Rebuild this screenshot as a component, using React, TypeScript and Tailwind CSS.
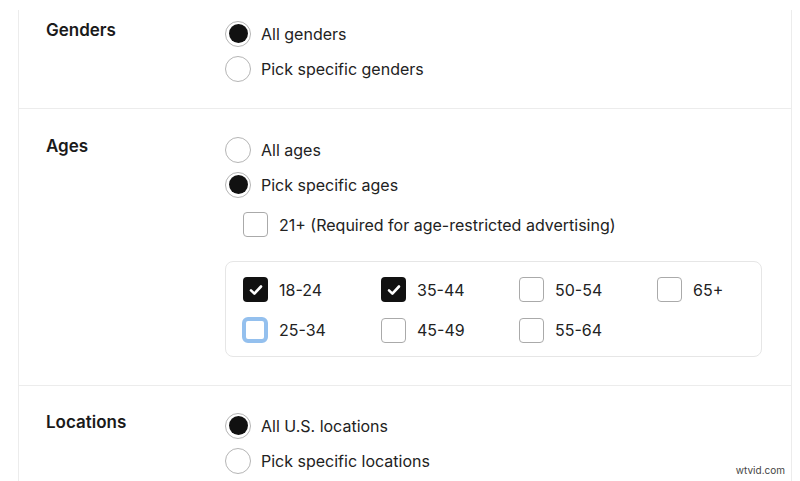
import React from "react"

function Radio({ checked, label }: { checked?: boolean; label: string }) {
  return (
    <div className="flex h-[35px] items-center gap-[10px]">
      <span className="flex h-[26px] w-[26px] shrink-0 items-center justify-center rounded-full border border-[#b5b5b5] bg-white">
        {checked && <span className="h-[19px] w-[19px] rounded-full bg-[#111]" />}
      </span>
      <span className="text-[16px] text-[#222]">{label}</span>
    </div>
  )
}

function Check({ checked, focused, label }: { checked?: boolean; focused?: boolean; label: string }) {
  return (
    <div className="flex items-center gap-[11px]">
      <span
        className={
          checked
            ? "flex h-[25px] w-[25px] shrink-0 items-center justify-center rounded-[4px] bg-[#111]"
            : focused
              ? "h-[26px] w-[26px] -ml-[1px] shrink-0 rounded-[6px] border-[4px] border-[#94c0ee] bg-white"
              : "h-[25px] w-[25px] shrink-0 rounded-[4px] border border-[#aaa] bg-white"
        }
      >
        {checked && (
          <svg width="16" height="16" viewBox="0 0 16 16" fill="none">
            <path d="M3 8.4 L6.4 11.6 L13 4.5" stroke="white" strokeWidth="2.6" strokeLinecap="round" strokeLinejoin="round" />
          </svg>
        )}
      </span>
      <span className="text-[16px] text-[#222]">{label}</span>
    </div>
  )
}

function Section({ label, children, className }: { label: string; children: React.ReactNode; className: string }) {
  return (
    <div className={"flex " + className}>
      <div className="w-[206px] shrink-0 pl-[27px] pt-[2px] text-[17px] font-semibold text-[#1a1a1a]">{label}</div>
      <div className="flex-1">{children}</div>
    </div>
  )
}

export default function App() {
  return (
    <div className="relative h-[481px] w-[800px] overflow-hidden bg-white pt-[10px]" style={{ fontFamily: "Inter, 'Noto Sans', sans-serif" }}>
      <div className="ml-[18px] w-[774px] h-[480px] border-x border-[#ececec]">
        <Section label="Genders" className="h-[99px] pt-[6px] border-b border-[#ececec]">
          <Radio checked label="All genders" />
          <Radio label="Pick specific genders" />
        </Section>
        <Section label="Ages" className="pt-[23px] pb-[28px] border-b border-[#ececec]">
          <Radio label="All ages" />
          <Radio checked label="Pick specific ages" />
          <div className="mt-[10px] pl-[18px]">
            <Check label="21+ (Required for age-restricted advertising)" />
          </div>
          <div className="mt-[24px] w-[537px] rounded-[8px] border border-[#e6e6e6] pl-[17px] pt-[15px] pb-[13px]">
            <div className="grid grid-cols-[138px_138px_138px_138px] gap-y-[15px]">
              <Check checked label="18-24" />
              <Check checked label="35-44" />
              <Check label="50-54" />
              <Check label="65+" />
              <Check focused label="25-34" />
              <Check label="45-49" />
              <Check label="55-64" />
            </div>
          </div>
        </Section>
        <Section label="Locations" className="pt-[22px]">
          <Radio checked label="All U.S. locations" />
          <Radio label="Pick specific locations" />
        </Section>
      </div>
      <div className="absolute bottom-[3px] right-[15px] text-[10px] text-[#444]">wtvid.com</div>
    </div>
  )
}
